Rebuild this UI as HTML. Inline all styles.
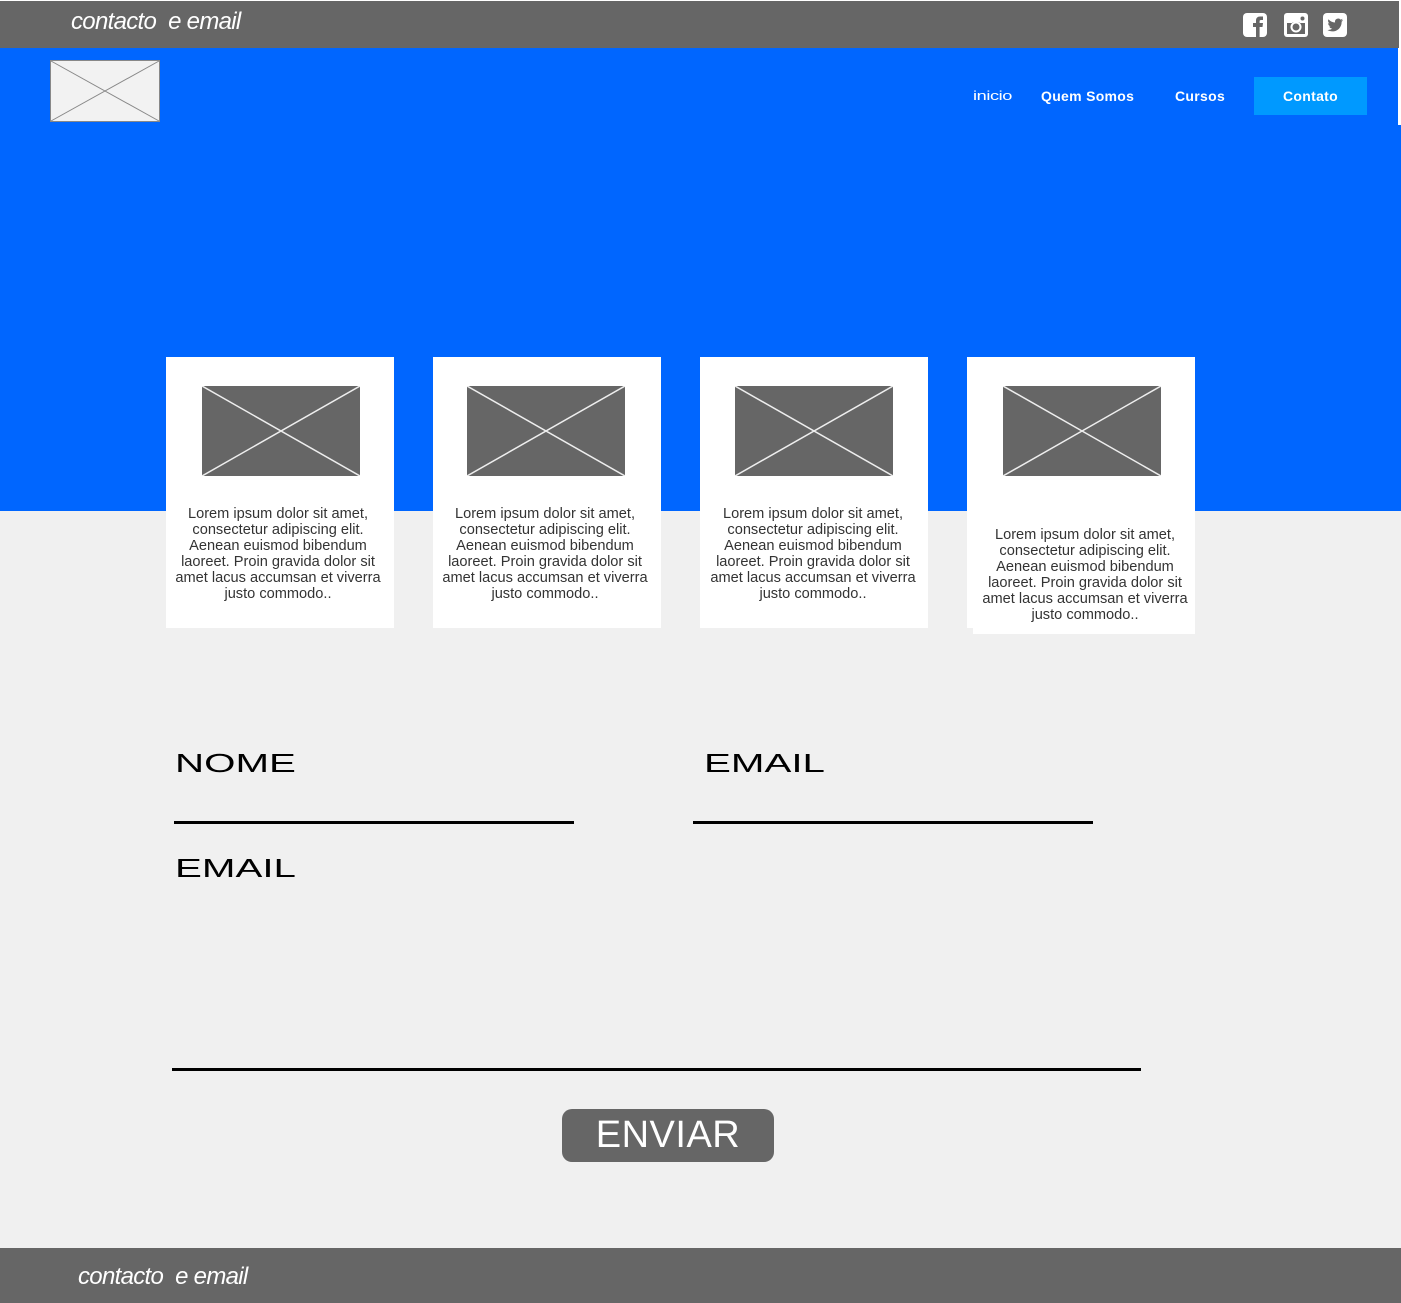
<!DOCTYPE html>
<html><head><meta charset="utf-8"><style>
*{margin:0;padding:0;box-sizing:border-box}
body{width:1401px;height:1303px;background:#f0f0f0;position:relative;overflow:hidden;font-family:"Liberation Sans",Arial,sans-serif}
.abs{position:absolute}
.top{left:0;top:0;width:1401px;height:48px;background:#666;border-top:1px solid #fff;border-right:2px solid #fff}
.ct{color:#fff;font-style:italic;font-size:24px;letter-spacing:-0.7px;white-space:pre}
.blue{left:0;top:48px;width:1401px;height:463px;background:#0066ff}
.nav{color:#fff;font-size:14px;font-weight:bold;top:88px}
.card{background:#fff;width:228px;height:271px;top:357px}
.card svg{position:absolute;left:36px;top:29px}
.card p{position:absolute;left:-4px;width:236px;top:149px;text-align:center;font-size:14.6px;line-height:16px;color:#333}
.lbl{font-size:26px;color:#000;transform:scaleX(1.55);transform-origin:0 0;line-height:26px}
.line{height:3px;background:#000}
</style></head><body>
<div class="abs top"></div>
<div class="abs ct" style="left:71px;top:8px">contacto  e email</div>
<svg class="abs" style="left:1243px;top:13px" width="24" height="24" viewBox="0 0 24 24"><rect width="24" height="24" rx="4" fill="#fff"/><path d="M13 24V14h-3v-4h3V7.5C13 5 14.5 3.5 17 3.5h3v3.5h-2c-1 0-1.4.5-1.4 1.4V10h3.4l-.5 4h-2.9v10z" fill="#666"/></svg>
<svg class="abs" style="left:1284px;top:13px" width="24" height="24" viewBox="0 0 24 24"><rect width="24" height="24" rx="3" fill="#fff"/><rect x="3" y="9" width="18" height="12" fill="#666"/><circle cx="12" cy="14" r="5.5" fill="#fff"/><circle cx="12" cy="14" r="3.5" fill="#666"/><circle cx="18.5" cy="5.5" r="2" fill="#666"/><rect x="3" y="8" width="5.5" height="2" fill="#fff"/><rect x="15.5" y="8" width="5.5" height="2" fill="#fff"/></svg>
<svg class="abs" style="left:1323px;top:13px" width="24" height="24" viewBox="0 0 24 24"><rect width="24" height="24" rx="4" fill="#fff"/><path d="M20 7c-.6.3-1.2.4-1.8.5.7-.4 1.1-1 1.4-1.7-.6.4-1.3.6-2 .8a3.2 3.2 0 0 0-5.5 2.9A9 9 0 0 1 5.5 6.2a3.2 3.2 0 0 0 1 4.3c-.5 0-1-.2-1.4-.4 0 1.6 1.1 2.9 2.6 3.2-.5.1-1 .2-1.5.1.4 1.3 1.6 2.2 3 2.2A6.5 6.5 0 0 1 4.5 17c1.4.9 3.1 1.4 4.9 1.4 5.9 0 9.2-4.9 9.2-9.2v-.4c.6-.5 1.1-1.1 1.4-1.8z" fill="#666"/></svg>
<div class="abs blue"></div>
<div class="abs" style="left:1398px;top:48px;width:3px;height:77px;background:#fff"></div>
<svg class="abs" style="left:50px;top:60px" width="110" height="62"><rect x=".5" y=".5" width="109" height="61" fill="#f2f2f2" stroke="#888"/><path d="M1 1L109 61M109 1L1 61" stroke="#888"/></svg>
<div class="abs nav" style="left:973px;font-weight:normal;font-size:13px;letter-spacing:-0.3px;transform:scaleX(1.4);transform-origin:0 0">inicio</div>
<div class="abs nav" style="left:1041px;letter-spacing:0.3px">Quem Somos</div>
<div class="abs nav" style="left:1175px;letter-spacing:0.3px">Cursos</div>
<div class="abs" style="left:1254px;top:77px;width:113px;height:38px;background:#0099ff;color:#fff;font-size:14px;font-weight:bold;text-align:center;line-height:38px;letter-spacing:0.3px">Contato</div>

<div class="abs card" style="left:166px"><svg width="158" height="90"><rect width="158" height="90" fill="#666"/><path d="M0 0L158 90M158 0L0 90" stroke="#eee" stroke-width="1.5"/></svg><p style="left:-6px">Lorem ipsum dolor sit amet,<br>consectetur adipiscing elit.<br>Aenean euismod bibendum<br>laoreet. Proin gravida dolor sit<br>amet lacus accumsan et viverra<br>justo commodo..</p></div>
<div class="abs card" style="left:433px"><svg width="158" height="90" style="left:34px"><rect width="158" height="90" fill="#666"/><path d="M0 0L158 90M158 0L0 90" stroke="#eee" stroke-width="1.5"/></svg><p style="left:-6px">Lorem ipsum dolor sit amet,<br>consectetur adipiscing elit.<br>Aenean euismod bibendum<br>laoreet. Proin gravida dolor sit<br>amet lacus accumsan et viverra<br>justo commodo..</p></div>
<div class="abs card" style="left:700px"><svg width="158" height="90" style="left:35px"><rect width="158" height="90" fill="#666"/><path d="M0 0L158 90M158 0L0 90" stroke="#eee" stroke-width="1.5"/></svg><p style="left:-5px">Lorem ipsum dolor sit amet,<br>consectetur adipiscing elit.<br>Aenean euismod bibendum<br>laoreet. Proin gravida dolor sit<br>amet lacus accumsan et viverra<br>justo commodo..</p></div>
<div class="abs" style="left:973px;top:400px;width:222px;height:234px;background:#fff"></div>
<div class="abs card" style="left:967px"><svg width="158" height="90"><rect width="158" height="90" fill="#666"/><path d="M0 0L158 90M158 0L0 90" stroke="#eee" stroke-width="1.5"/></svg><p style="top:170px;left:0px">Lorem ipsum dolor sit amet,<br>consectetur adipiscing elit.<br>Aenean euismod bibendum<br>laoreet. Proin gravida dolor sit<br>amet lacus accumsan et viverra<br>justo commodo..</p></div>

<div class="abs lbl" style="left:175px;top:750px">NOME</div>
<div class="abs lbl" style="left:704px;top:750px">EMAIL</div>
<div class="abs line" style="left:174px;top:821px;width:400px"></div>
<div class="abs line" style="left:693px;top:821px;width:400px"></div>
<div class="abs lbl" style="left:175px;top:855px">EMAIL</div>
<div class="abs line" style="left:172px;top:1068px;width:969px"></div>
<div class="abs" style="left:562px;top:1109px;width:212px;height:53px;background:#666;border-radius:10px;color:#fff;font-size:38px;text-align:center;line-height:53px;letter-spacing:0.5px">ENVIAR</div>

<div class="abs" style="left:0;top:1248px;width:1401px;height:55px;background:#666"></div>
<div class="abs ct" style="left:78px;top:1263px">contacto  e email</div>
</body></html>
